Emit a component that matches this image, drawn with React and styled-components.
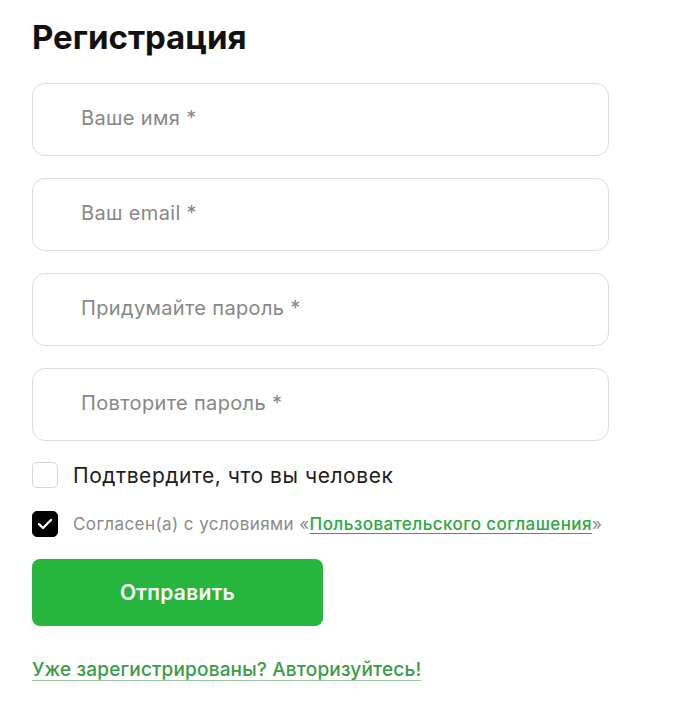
import React, { useState } from "react";
import styled, { createGlobalStyle } from "styled-components";

const GlobalStyle = createGlobalStyle`
  body {
    margin: 0;
    background: #fff;
    font-family: Inter, "Noto Sans", Arial, sans-serif;
  }
`;

const Page = styled.div`
  padding: 14px 32px 20px;
  width: 577px;
`;

const Title = styled.h1`
  margin: 0 0 23px;
  font-size: 33px;
  font-weight: 700;
  color: #111;
  line-height: 46px;
`;

const Form = styled.form`
  display: flex;
  flex-direction: column;
`;

const Fields = styled.div`
  display: flex;
  flex-direction: column;
  gap: 22px;
  margin-bottom: 21px;
`;

const Input = styled.input`
  box-sizing: border-box;
  width: 100%;
  height: 73px;
  padding: 0 0 3px 48px;
  border: 1px solid #dcdcdc;
  border-radius: 13px;
  font-family: inherit;
  font-size: 20px;
  letter-spacing: 0.35px;
  color: #222;
  outline: none;
  background: #fff;

  &::placeholder {
    color: #878787;
  }
`;

const CheckRow = styled.label`
  display: flex;
  align-items: center;
  gap: 15px;
  margin-bottom: ${(p) => p.$mb || 0}px;
  cursor: pointer;
`;

const Box = styled.span`
  flex: none;
  box-sizing: border-box;
  width: 26px;
  height: 26px;
  border-radius: 5px;
  display: flex;
  align-items: center;
  justify-content: center;
  background: ${(p) => (p.$checked ? "#000" : "#fff")};
  border: 1px solid ${(p) => (p.$checked ? "#000" : "#d6d6d6")};
`;

const CheckText = styled.span`
  font-size: ${(p) => (p.$small ? 17 : 21)}px;
  letter-spacing: ${(p) => (p.$small ? 0.42 : 0.55)}px;
  color: ${(p) => (p.$small ? "#8a8a8a" : "#1c1c1c")};
`;

const Link = styled.a`
  color: #2ea83f;
  font-weight: 500;
  text-decoration: underline;
  text-underline-offset: 3px;
`;

const Submit = styled.button`
  width: 291px;
  height: 67px;
  border: none;
  border-radius: 8px;
  background: #26b53d;
  color: #fff;
  font-family: inherit;
  font-size: 21px;
  letter-spacing: 0.3px;
  font-weight: 600;
  cursor: pointer;
  margin-bottom: 32px;
`;

const LoginLink = styled.a`
  font-size: 19px;
  letter-spacing: 0.17px;
  font-weight: 500;
  color: #3a9a46;
  text-decoration: underline;
  text-decoration-color: #9bc8a2;
  text-underline-offset: 4px;
  align-self: flex-start;
`;

const Check = () => (
  <svg width="16" height="12" viewBox="0 0 16 12" fill="none">
    <path d="M2 6.2l4 3.8 8-8" stroke="#fff" strokeWidth="2.4" strokeLinecap="round" strokeLinejoin="round" />
  </svg>
);

const App = () => {
  const [human, setHuman] = useState(false);
  const [agree, setAgree] = useState(true);

  return (
    <>
      <GlobalStyle />
      <Page>
        <Title>Регистрация</Title>
        <Form onSubmit={(e) => e.preventDefault()}>
          <Fields>
            <Input placeholder="Ваше имя *" />
            <Input placeholder="Ваш email *" />
            <Input type="password" placeholder="Придумайте пароль *" />
            <Input type="password" placeholder="Повторите пароль *" />
          </Fields>
          <CheckRow $mb={23} onClick={() => setHuman(!human)}>
            <Box $checked={human}>{human && <Check />}</Box>
            <CheckText>Подтвердите, что вы человек</CheckText>
          </CheckRow>
          <CheckRow $mb={22} onClick={() => setAgree(!agree)}>
            <Box $checked={agree}>{agree && <Check />}</Box>
            <CheckText $small>
              Согласен(а) с условиями «<Link href="#">Пользовательского соглашения</Link>»
            </CheckText>
          </CheckRow>
          <Submit type="submit">Отправить</Submit>
          <LoginLink href="#">Уже зарегистрированы? Авторизуйтесь!</LoginLink>
        </Form>
      </Page>
    </>
  );
};

export default App;
